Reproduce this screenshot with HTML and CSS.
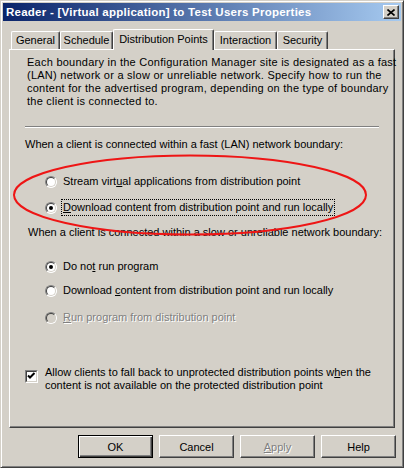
FILE: index.html
```html
<!DOCTYPE html>
<html>
<head>
<meta charset="utf-8">
<title>Properties</title>
<link rel="stylesheet" href="styles.css">
</head>
<body>
<div class="window">
  <div class="titlebar">
    <span class="title">Reader - [Virtual application] to Test Users Properties</span>
    <span class="close"><svg width="8" height="7" viewBox="0 0 8 7"><path d="M0.5 0.5 L7.5 6.5 M7.5 0.5 L0.5 6.5" stroke="#000" stroke-width="1.6" fill="none"/></svg></span>
  </div>
  <div class="tabs">
    <span class="tab t-general">General</span>
    <span class="tab t-schedule">Schedule</span>
    <span class="tab t-dp selected">Distribution Points</span>
    <span class="tab t-interaction">Interaction</span>
    <span class="tab t-security">Security</span>
  </div>
  <div class="panel">
    <p class="desc">Each boundary in the Configuration Manager site is designated as a fast<br>(LAN) network or a slow or unreliable network. Specify how to run the<br>content for the advertised program, depending on the type of boundary<br>the client is connected to.</p>
    <div class="sep"></div>
    <p class="heading h-fast">When a client is connected within a fast (LAN) network boundary:</p>
    <div class="opt o1"><span class="radio"></span><span class="lbl">Stream virt<u>u</u>al applications from distribution point</span></div>
    <div class="opt o2"><span class="radio checked"></span><span class="lbl focus"><u>D</u>ownload content from distribution point and run locally</span></div>
    <p class="heading h-slow">When a client is connected within a slow or unreliable network boundary:</p>
    <div class="opt o3"><span class="radio checked"></span><span class="lbl">Do no<u>t</u> run program</span></div>
    <div class="opt o4"><span class="radio"></span><span class="lbl">Download <u>c</u>ontent from distribution point and run locally</span></div>
    <div class="opt o5 disabled"><span class="radio"></span><span class="lbl"><u>R</u>un program from distribution point</span></div>
    <div class="check">
      <span class="box"><svg width="9" height="9" viewBox="0 0 9 9"><path d="M1 3.5 L3 5.5 L7.5 1" stroke="#000" stroke-width="2" fill="none"/></svg></span>
      <span class="clbl">Allow clients to fall back to unprotected distribution points w<u>h</u>en the<br>content is not available on the protected distribution point</span>
    </div>
  </div>
  <div class="buttons">
    <span class="btn default">OK</span>
    <span class="btn">Cancel</span>
    <span class="btn disabled"><u>A</u>pply</span>
    <span class="btn">Help</span>
  </div>
  <svg class="ellipse" width="404" height="468" viewBox="0 0 404 468"><ellipse cx="189" cy="194" rx="176" ry="39.5" fill="none" stroke="#ee1515" stroke-width="2"/></svg>
</div>
</body>
</html>
```

FILE: styles.css
```css
html, body {
  margin: 0;
  padding: 0;
  background: #d4d0c8;
}

body {
  font-family: "Liberation Sans", Arial, sans-serif;
  font-size: 11px;
  color: #000;
}

.window {
  position: relative;
  width: 404px;
  height: 468px;
  box-sizing: border-box;
  border: 1px solid;
  border-color: #d4d0c8 #404040 #404040 #d4d0c8;
  box-shadow: inset 1px 1px #fff, inset -1px -1px #808080;
  padding: 2px;
  background: #d4d0c8;
}

.titlebar {
  height: 18px;
  display: flex;
  align-items: center;
  justify-content: space-between;
  padding-left: 3px;
  padding-right: 2px;
  background: linear-gradient(to right, #0a246a, #a6caf0);
}

.title {
  color: #fff;
  font-weight: bold;
  font-size: 11.5px;
  letter-spacing: 0.25px;
  white-space: nowrap;
}

.close {
  width: 16px;
  height: 14px;
  box-sizing: border-box;
  display: flex;
  align-items: center;
  justify-content: center;
  background: #d4d0c8;
  border: 1px solid;
  border-color: #fff #404040 #404040 #fff;
  box-shadow: inset -1px -1px #808080;
}

.tabs {
  display: flex;
  align-items: flex-end;
  height: 20px;
  margin-top: 8px;
  padding-left: 8px;
}

.tab {
  box-sizing: border-box;
  height: 18px;
  line-height: 16px;
  text-align: center;
  border: 1px solid;
  border-color: #fff #404040 transparent #fff;
  border-bottom: 0;
  border-radius: 2px 2px 0 0;
  box-shadow: inset -1px 0 #808080;
  white-space: nowrap;
}

.t-general { width: 49px; }
.t-schedule { width: 53px; }
.t-dp { width: 101px; }
.t-interaction { width: 63px; }
.t-security { width: 51px; }

.tab.selected {
  position: relative;
  z-index: 2;
  height: 21px;
  margin-bottom: -1px;
  line-height: 18px;
  background: #d4d0c8;
}

.panel {
  box-sizing: border-box;
  height: 379px;
  margin: 0 6px;
  padding: 6px 15px 0 15px;
  border: 1px solid;
  border-color: #fff #404040 #404040 #fff;
  box-shadow: inset -1px -1px #808080;
}

.panel p {
  margin: 0;
  line-height: 13px;
  white-space: nowrap;
}

.desc {
  padding-left: 2px;
  letter-spacing: 0.25px;
}

.sep {
  width: 354px;
  height: 0;
  margin-top: 18px;
  border-top: 1px solid #808080;
  border-bottom: 1px solid #fff;
}

.h-fast { margin-top: 10px !important; }
.h-slow { margin-top: 10px !important; padding-left: 3px; }

.opt {
  display: flex;
  align-items: center;
  gap: 4px;
  margin-left: 20px;
  height: 17px;
}

.o1 { margin-top: 22px; }
.o2 { margin-top: 9px; }
.o3 { margin-top: 19px; }
.o4 { margin-top: 7px; }
.o5 { margin-top: 10px; }

.radio {
  position: relative;
  width: 12px;
  height: 12px;
  box-sizing: border-box;
  border-radius: 50%;
  border: 1px solid;
  border-color: #808080 #fff #fff #808080;
  background: #fff;
  flex: none;
}

.radio::before {
  content: "";
  position: absolute;
  inset: 0;
  border-radius: 50%;
  border: 1px solid;
  border-color: #404040 #d4d0c8 #d4d0c8 #404040;
}

.radio.checked::after {
  content: "";
  position: absolute;
  left: 3px;
  top: 3px;
  width: 4px;
  height: 4px;
  border-radius: 50%;
  background: #000;
}

.lbl {
  border: 1px solid transparent;
  padding: 1px 1px;
  line-height: 13px;
  white-space: nowrap;
}

.lbl.focus {
  border: 1px dotted #000;
}

.disabled .radio {
  background: #d4d0c8;
}

.disabled .lbl,
.btn.disabled {
  color: #808080;
  text-shadow: 1px 1px #fff;
}

.check {
  display: flex;
  align-items: flex-start;
  gap: 7px;
  margin-top: 40px;
}

.box {
  position: relative;
  width: 13px;
  height: 13px;
  box-sizing: border-box;
  margin-top: 4px;
  border: 1px solid;
  border-color: #808080 #fff #fff #808080;
  background: #fff;
  display: flex;
  align-items: center;
  justify-content: center;
  flex: none;
}

.box::before {
  content: "";
  position: absolute;
  inset: 0;
  border: 1px solid;
  border-color: #404040 #d4d0c8 #d4d0c8 #404040;
}

.clbl {
  line-height: 13px;
  white-space: nowrap;
}

.buttons {
  display: flex;
  justify-content: flex-end;
  gap: 6px;
  margin-top: 7px;
  padding-right: 5px;
}

.btn {
  box-sizing: border-box;
  width: 75px;
  height: 23px;
  display: flex;
  align-items: center;
  justify-content: center;
  border: 1px solid;
  border-color: #fff #404040 #404040 #fff;
  box-shadow: inset -1px -1px #808080;
}

.btn.default {
  border-color: #000;
  box-shadow: inset 1px 1px #fff, inset -1px -1px #404040, inset -2px -2px #808080;
}

.ellipse {
  position: absolute;
  left: 0;
  top: 0;
  pointer-events: none;
}
```
